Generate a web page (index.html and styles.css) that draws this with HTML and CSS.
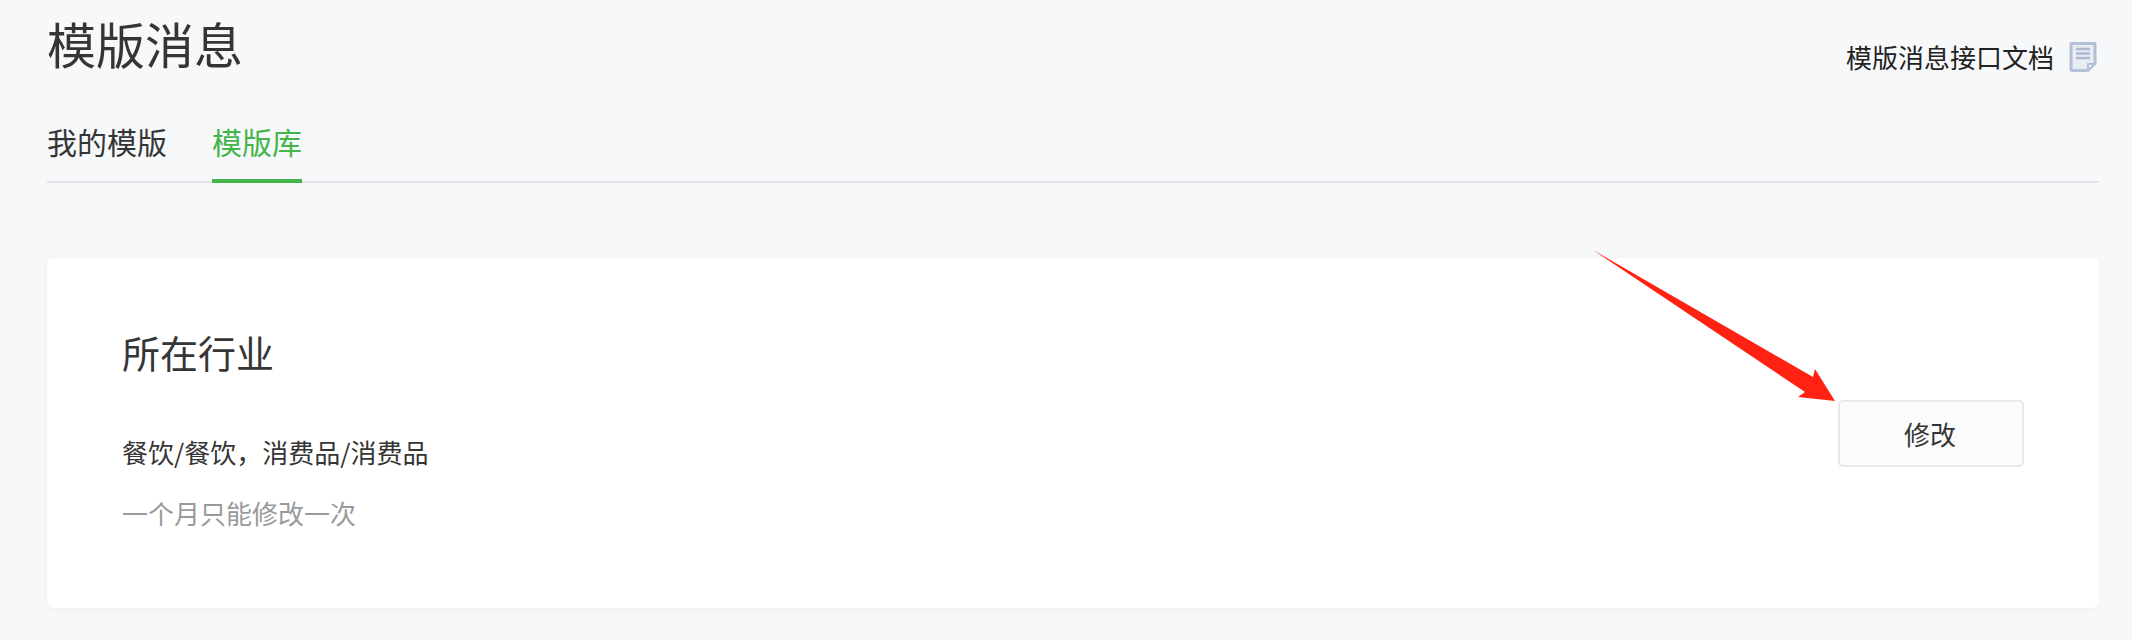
FILE: index.html
```html
<!DOCTYPE html>
<html lang="zh-CN">
<head>
  <meta charset="UTF-8">
  <title>模版消息</title>
  <link rel="stylesheet" href="styles.css">
</head>
<body>

  <div class="page">
    <div class="page-head">
      <h1 class="page-title">模版消息</h1>
      <a class="doc-link">
        <span class="doc-text">模版消息接口文档</span>
        <svg class="doc-icon" width="28" height="30" viewBox="0 0 28 30">
          <path d="M2 1.5h24v20l-7 7H3.5a1.5 1.5 0 0 1-1.5-1.5z" fill="#e8ecf3" stroke="#b4c0d8" stroke-width="3" stroke-linejoin="round"/>
          <path d="M7 7h14M7 11.5h14M7 16h14" stroke="#aeb8d0" stroke-width="2.6"/>
          <path d="M19 28v-6h7z" fill="#fff" stroke="#b4c0d8" stroke-width="2"/>
        </svg>
      </a>
    </div>

    <div class="tabs">
      <a class="tab">我的模版</a>
      <a class="tab tab-active">模版库</a>
    </div>

    <div class="card">
      <div class="card-info">
        <h2 class="card-title">所在行业</h2>
        <p class="card-text">餐饮/餐饮，消费品/消费品</p>
        <p class="card-hint">一个月只能修改一次</p>
      </div>
      <button class="btn-edit">修改</button>
    </div>
  </div>

  <!-- annotation arrow drawn over the screenshot -->
  <svg class="arrow" width="250" height="160" viewBox="0 0 250 160">
    <polygon points="3,2 223,129 225,121 245,153 208,149 215,144" fill="#ff2213"/>
  </svg>

</body>
</html>
```

FILE: styles.css
```css
body {
  font-family: "Noto Sans CJK SC", "Liberation Sans", sans-serif;
  background: #f7f8fa;
  margin: 0;
  color: #353535;
  height: 640px;
  overflow: hidden;
}

.page {
  padding: 8px 33px 0 47px;
}

.page-head {
  display: flex;
  justify-content: space-between;
  height: 104px;
}

.page-title {
  font-size: 49px;
  font-weight: 400;
  line-height: 70px;
  margin: 0;
}

.doc-link {
  display: flex;
  align-items: center;
  gap: 15px;
  height: 30px;
  margin-top: 34px;
  padding-right: 2px;
  font-size: 26px;
  color: #222;
}

.doc-text {
  margin-bottom: 2px;
}

.tabs {
  display: flex;
  gap: 45px;
  height: 69px;
  border-bottom: 2px solid #e2e3e7;
}

.tab {
  font-size: 30px;
  line-height: 44px;
  padding-top: 7px;
}

.tab-active {
  color: #44b549;
  box-sizing: border-box;
  height: 71px;
  border-bottom: 4px solid #44b549;
}

.card {
  display: flex;
  justify-content: space-between;
  align-items: flex-start;
  height: 350px;
  box-sizing: border-box;
  margin-top: 75px;
  padding: 0 75px;
  background: #fff;
  border-radius: 6px;
  box-shadow: 0 2px 8px rgba(0, 0, 0, 0.03);
}

.card-title {
  font-size: 38px;
  font-weight: 400;
  line-height: 56px;
  margin: 66px 0 0;
}

.card-text {
  font-size: 26px;
  line-height: 38px;
  margin: 53px 0 0;
}

.card-hint {
  font-size: 26px;
  line-height: 38px;
  margin: 23px 0 0;
  color: #9a9a9a;
}

.btn-edit {
  width: 186px;
  height: 67px;
  margin-top: 142px;
  padding: 0 2px 0 0;
  font-family: inherit;
  font-size: 26px;
  color: #353535;
  background: #fbfbfc;
  border: 2px solid #e7e9ed;
  border-radius: 5px;
}

/* sits on top of the card, so it is placed by coordinates */
.arrow {
  position: absolute;
  left: 1590px;
  top: 248px;
}
```
